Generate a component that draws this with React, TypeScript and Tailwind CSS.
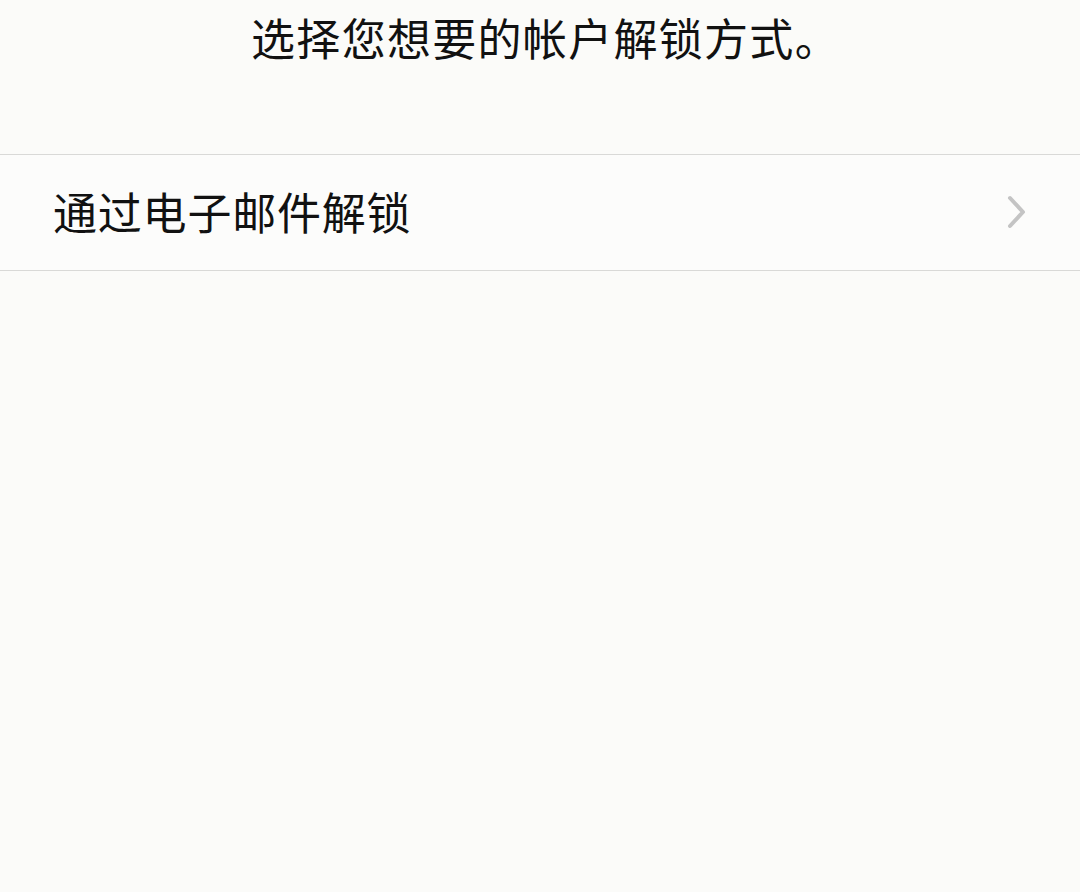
import React from "react";

export default function App() {
  return (
    <div
      className="w-[1080px] h-[892px] bg-[#fbfbf9] overflow-hidden"
      style={{ fontFamily: '"Noto Sans CJK SC", "Noto Sans", sans-serif' }}
    >
      <div className="h-[154px] pt-[9px] flex justify-center">
        <div className="text-[44px] leading-[56px] text-[#111] tracking-[1.3px] pl-[11px]">
          选择您想要的帐户解锁方式。
        </div>
      </div>
      <div className="h-[117px] border-y border-[#d9d9d7] bg-[#fcfcfb] flex items-center pl-[53px] pr-[52px]">
        <div className="flex-1 text-[44px] leading-[56px] text-[#111] pb-[4px] tracking-[0.8px]">
          通过电子邮件解锁
        </div>
        <svg width="22" height="34" viewBox="0 0 22 34" className="mb-[2px]">
          <path d="M4 3 L17 17 L4 31" fill="none" stroke="#c4c4c4" strokeWidth="4" strokeLinecap="round" strokeLinejoin="round" />
        </svg>
      </div>
    </div>
  );
}
